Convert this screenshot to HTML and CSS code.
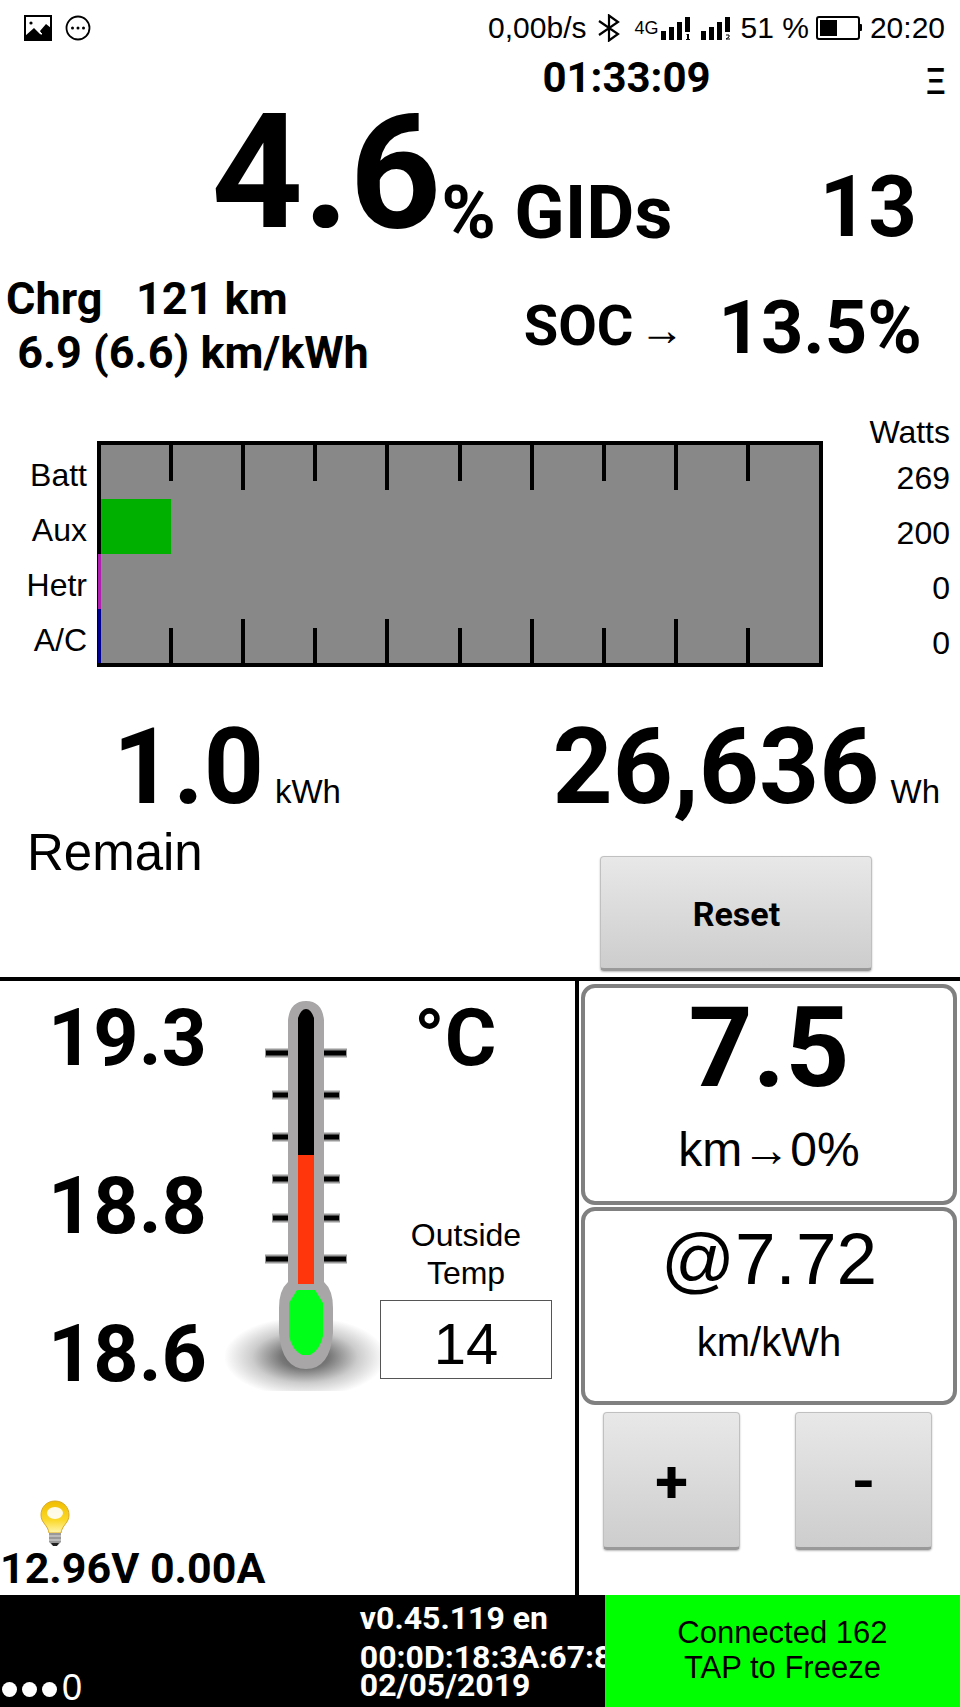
FILE: index.html
```html
<!DOCTYPE html>
<html lang="en">
  <head>
    <meta charset="UTF-8" />
    <meta name="viewport" content="width=device-width, initial-scale=1.0" />
    <title>EV Battery Monitor</title>
    <link rel="stylesheet" href="styles.css">
  </head>
  <body>
    <!-- phone status bar -->
    <div class="status">
      <svg class="icon" width="28" height="26" viewBox="0 0 28 26">
        <rect x="1" y="1" width="26" height="24" fill="none" stroke="#000" stroke-width="2" />
        <circle cx="7" cy="8" r="1.6" />
        <path d="M1 21L10 13L16 19L18 20L16 16L22 9L27 13V25H1Z" />
        <path d="M14 15L18 19" stroke="#fff" stroke-width="1" />
      </svg>
      <svg class="icon" width="26" height="26" viewBox="0 0 26 26">
        <circle cx="13" cy="13" r="11.5" fill="none" stroke="#000" stroke-width="1.8" />
        <circle cx="7.5" cy="13" r="1.5" />
        <circle cx="13" cy="13" r="1.5" />
        <circle cx="18.5" cy="13" r="1.5" />
      </svg>
      <span class="speed">0,00b/s</span>
      <svg class="bluetooth" width="22" height="28" viewBox="0 0 22 28">
        <path d="M1 7L20 20L11 26.500V1.500L20 8L1 21" fill="none" stroke="#000" stroke-width="2.2" />
      </svg>
      <span class="network">4G</span>
      <svg class="signal" width="30" height="26" viewBox="0 0 30 26">
        <path d="M0 16h5v9h-5zM8 12h5v13h-5zM16 7h5v18h-5zM24 2h5v15h-5zM26 19h2v5h1v1h-4v-1h1v-4h-1z" />
      </svg>
      <svg class="signal" width="30" height="26" viewBox="0 0 30 26">
        <path d="M0 16h5v9h-5zM8 12h5v13h-5zM16 7h5v18h-5zM24 2h5v15h-5z" />
        <path d="M25 20h3v2l-3 2h4" fill="none" stroke="#000" />
      </svg>
      <span class="percent">51 %</span>
      <svg class="battery" width="46" height="24" viewBox="0 0 46 24">
        <rect x="1" y="1" width="42" height="22" rx="2" fill="none" stroke="#000" stroke-width="2" />
        <rect x="4" y="4" width="17" height="16" />
        <rect x="43" y="8" width="3" height="7" rx="1" />
      </svg>
      <span class="clock">20:20</span>
    </div>

    <div class="topline">
      <div class="timer">01:33:09</div>
      <button class="menu" aria-label="Menu">Ξ</button>
    </div>

    <div class="gids">
      <div class="gids-percent">4.6</div>
      <div class="gids-label">% GIDs</div>
      <div class="gids-count">13</div>
    </div>

    <div class="summary">
      <div class="economy">
        <div>Chrg &nbsp; 121 km</div>
        <div>&nbsp;6.9 (6.6) km/kWh</div>
      </div>
      <div class="soc">
        <div class="soc-label">SOC<span class="arrow">→</span></div>
        <div class="soc-value">13.5%</div>
      </div>
    </div>

    <!-- power usage bars -->
    <div class="power">
      <div class="power-labels">
        <div>Batt</div>
        <div>Aux</div>
        <div>Hetr</div>
        <div>A/C</div>
      </div>
      <svg class="chart" viewBox="0 0 726 226">
        <rect x="2" y="2" width="722" height="222" fill="#888" stroke="#000" stroke-width="4" />
        <rect x="4" y="58" width="70" height="55" fill="#00b000" />
        <rect x="1" y="113" width="3" height="55" fill="#b020b0" />
        <rect x="1" y="168" width="3" height="54" fill="#000090" />
        <path d="M74 4v36M146 4v45M218 4v36M290 4v45M363 4v36M435 4v45M507 4v36M579 4v45M651 4v36" stroke="#000" stroke-width="4" />
        <path d="M74 222v-35M146 222v-44M218 222v-35M290 222v-44M363 222v-35M435 222v-44M507 222v-35M579 222v-44M651 222v-35" stroke="#000" stroke-width="4" />
      </svg>
      <div class="power-values">
        <div class="power-head">Watts</div>
        <div>269</div>
        <div>200</div>
        <div>0</div>
        <div>0</div>
      </div>
    </div>

    <div class="energy">
      <div class="remain">
        <div class="amount"><b>1.0</b><span>kWh</span></div>
        <div class="remain-label">Remain</div>
      </div>
      <div class="used">
        <div class="amount"><b>26,636</b><span>Wh</span></div>
        <button class="btn reset">Reset</button>
      </div>
    </div>

    <div class="panels">
      <div class="left">
        <div class="temps">
          <div class="readings">
            <div>19.3</div>
            <div>18.8</div>
            <div>18.6</div>
          </div>
          <svg class="thermo" width="155" height="393" viewBox="0 0 155 393">
            <defs>
              <radialGradient id="shadow">
                <stop offset="0" stop-color="#555" />
                <stop offset="0.3" stop-color="#777" />
                <stop offset="0.65" stop-color="#ccc" />
                <stop offset="1" stop-color="#fff" />
              </radialGradient>
            </defs>
            <ellipse cx="80" cy="359" rx="81" ry="40" fill="url(#shadow)" />
            <g stroke="#999" stroke-width="9">
              <path d="M40 55H122M47 97H115M47 139H115M47 181H115M47 220H115M40 261H122" />
            </g>
            <g stroke="#000" stroke-width="5">
              <path d="M41 55H121M48 97H114M48 139H114M48 181H114M48 220H114M41 261H121" />
            </g>
            <path d="M63 22Q65 3 81 3Q97 3 99 22V284Q108 292 108 310V335Q105 371 81 371Q57 371 54 335V310Q54 292 63 284Z" fill="#a8a6a6" />
            <path d="M73 157V20Q76 11 81 11Q86 11 89 20V157Z" />
            <rect x="73" y="157" width="16" height="129" fill="#ff350b" />
            <path d="M72 292H90L98 305V338Q95 352 85 357H77Q67 352 64 338V305Z" fill="#00ff19" />
          </svg>
          <div class="outside">
            <div class="unit">°C</div>
            <label for="outside">Outside<br />Temp</label>
            <input type="text" id="outside" value="14" />
          </div>
        </div>
        <div class="aux">
          <svg class="bulb" width="30" height="46" viewBox="0 0 30 46">
            <defs>
              <linearGradient id="glow" x1="0" y1="0" x2="0" y2="1">
                <stop offset="0" stop-color="#f0bd00" />
                <stop offset="0.6" stop-color="#fbd92a" />
                <stop offset="1" stop-color="#fff6b0" />
              </linearGradient>
            </defs>
            <path d="M15 1C6 1 1 8 1 15C1 23 8 25 9 33H21C22 25 29 23 29 15C29 8 24 1 15 1Z" fill="url(#glow)" stroke="#d9a928" />
            <ellipse cx="15" cy="13" rx="8" ry="6" fill="#fff" opacity="0.9" />
            <path d="M9 33H21V42L18 45H12L9 42Z" fill="#999" />
            <path d="M9 36H21M9 40H21" stroke="#ddd" />
            <path d="M11 43H19L17 46H13Z" fill="#222" />
          </svg>
          <div>12.96V 0.00A</div>
        </div>
      </div>

      <div class="right">
        <div class="card range">
          <div class="range-value">7.5</div>
          <div class="range-unit">km→0%</div>
        </div>
        <div class="card rate">
          <div class="rate-value">@7.72</div>
          <div class="rate-unit">km/kWh</div>
        </div>
        <div class="steps">
          <button class="btn step">+</button>
          <button class="btn step">-</button>
        </div>
      </div>
    </div>

    <div class="footer">
      <div class="dots"><i></i><i></i><i></i><span>0</span></div>
      <div class="info">
        <div class="version">v0.45.119 en</div>
        <div>00:0D:18:3A:67:8</div>
        <div>02/05/2019</div>
      </div>
      <button class="connection">Connected 162<br />TAP to Freeze</button>
    </div>
  </body>
</html>
```
FILE: styles.css
```css
* {
  box-sizing: border-box;
}

body {
  margin: 0;
  min-height: 100vh;
  display: flex;
  flex-direction: column;
  background: #fff;
  color: #000;
  font-family: "Liberation Sans", Arial, sans-serif;
  font-size: 32px;
}

button {
  font-family: inherit;
  color: #000;
  border: none;
  padding: 0;
  cursor: pointer;
}

/* status bar */
.status {
  display: flex;
  align-items: center;
  height: 54px;
  padding: 2px 15px 0 24px;
  font-size: 30px;
  white-space: nowrap;
}

.icon {
  margin-right: 13px;
}

.speed {
  margin-left: auto;
}

.bluetooth {
  margin: 0 15px 0 11px;
}

.network {
  font-size: 18px;
}

.signal {
  margin-left: 2px;
}

.signal + .signal {
  margin: 0 10px 0 10px;
}

.battery {
  margin: 0 8px 0 7px;
}

/* timer and menu */
.topline {
  display: flex;
  align-items: flex-end;
  justify-content: space-between;
  height: 42px;
  padding: 0 14px 0 56.5%;
  font-family: Roboto, sans-serif;
  font-weight: bold;
}

.timer {
  font-size: 42px;
  line-height: 36px;
}

.menu {
  background: none;
  font-family: Roboto, sans-serif;
  font-weight: 500;
  font-size: 36px;
  line-height: 28px;
}

.gids {
  display: flex;
  align-items: flex-end;
  padding: 0 43px 0 22%;
  font-family: Roboto, sans-serif;
  font-weight: bold;
}

.gids-percent {
  font-size: 160px;
  line-height: 154px;
}

.gids-label {
  font-size: 74px;
  line-height: 74px;
}

.gids-count {
  margin-left: auto;
  font-size: 85px;
  line-height: 86px;
}

.summary {
  display: flex;
  justify-content: space-between;
  padding: 22px 38px 0 6px;
  font-family: Roboto, sans-serif;
  font-weight: bold;
}

.economy {
  font-size: 45px;
  line-height: 54px;
}

.soc {
  display: flex;
  align-items: flex-end;
  gap: 34px;
  padding-bottom: 18px;
}

.soc-label {
  font-size: 56px;
  line-height: 64px;
}

.arrow {
  margin-left: 6px;
  font-family: "Liberation Sans", Arial, sans-serif;
  font-size: 45px;
}

.soc-value {
  font-size: 74px;
  line-height: 68px;
}

/* power bars */
.power {
  display: flex;
  align-items: flex-end;
  margin-top: 34px;
  padding-right: 10px;
  line-height: 55px;
  text-align: right;
}

.power-labels {
  width: 87px;
  margin: 0 10px 3px 0;
}

.chart {
  flex: 1;
  margin-bottom: 4px;
}

.power-values {
  width: 127px;
}

.power-head {
  line-height: 37px;
}

/* energy */
.energy {
  display: flex;
  justify-content: space-between;
  padding: 44px 20px 6px 27px;
}

.amount {
  display: flex;
  align-items: baseline;
  gap: 11px;
}

.amount span {
  font-size: 33px;
}

.amount b {
  font-family: Roboto, sans-serif;
  font-size: 105px;
  line-height: 105px;
}

.remain .amount {
  padding-left: 86px;
}

.remain-label {
  font-size: 51px;
  line-height: 60px;
  margin-top: 3px;
}

.btn {
  padding-top: 3px;
  font-family: Roboto, sans-serif;
  font-weight: bold;
  background: linear-gradient(#e8e8e8, #cdcdcd);
  border: 1px solid #c0c0c0;
  border-bottom: 3px solid #999;
  border-radius: 4px;
  box-shadow: 0 1px 2px #bbb;
}

.reset {
  display: block;
  width: 272px;
  height: 115px;
  margin: 36px 0 0 48px;
  font-size: 34px;
}

/* lower panels */
.panels {
  flex: 1;
  display: grid;
  grid-template-columns: 579fr 381fr;
  border-top: 4px solid #000;
}

.left {
  display: flex;
  flex-direction: column;
  justify-content: space-between;
  border-right: 4px solid #000;
  padding: 17px 23px 5px 0;
}

.temps {
  display: flex;
  font-family: Roboto, sans-serif;
}

.readings {
  flex: 1;
  padding-left: 48px;
  font-size: 79px;
  font-weight: bold;
  line-height: 80px;
}

.readings div + div {
  margin-top: 88px;
}

.readings div:last-child {
  margin-top: 68px;
}

.outside {
  display: flex;
  flex-direction: column;
  width: 172px;
  padding-bottom: 15px;
  font-family: "Liberation Sans", Arial, sans-serif;
}

.unit {
  padding-left: 34px;
  font-family: Roboto, sans-serif;
  font-size: 79px;
  font-weight: bold;
  line-height: 80px;
}

.outside label {
  margin: auto 0 8px;
  line-height: 38px;
  text-align: center;
}

.outside input {
  width: 100%;
  height: 79px;
  padding: 8px 0 0;
  border: 1px solid #555;
  background: #fff;
  font-family: inherit;
  font-size: 58px;
  text-align: center;
}

.aux {
  font-family: Roboto, sans-serif;
  font-size: 43px;
  font-weight: bold;
  line-height: 44px;
}

.bulb {
  display: block;
  margin-left: 40px;
}

.right {
  padding: 3px 3px 0 2px;
}

.card {
  border: 4px solid #808080;
  border-radius: 14px;
  text-align: center;
}

.range {
  height: 221px;
  padding-top: 4px;
}

.range-value {
  font-family: Roboto, sans-serif;
  font-size: 112px;
  font-weight: bold;
  line-height: 112px;
}

.range-unit {
  margin-top: 18px;
  font-size: 48px;
  line-height: 56px;
}

.rate {
  height: 198px;
  margin-top: 2px;
  padding-top: 8px;
}

.rate-value {
  font-size: 73px;
  line-height: 80px;
}

.rate-unit {
  margin-top: 19px;
  font-size: 40px;
  line-height: 48px;
}

.steps {
  display: flex;
  justify-content: space-between;
  padding: 7px 25px 0 22px;
}

.step {
  width: 137px;
  height: 138px;
  font-size: 60px;
}

/* footer */
.footer {
  display: flex;
  height: 112px;
  background: #000;
  color: #fff;
}

.dots {
  display: flex;
  align-items: flex-end;
  gap: 5px;
  flex: 1;
  padding: 0 0 10px 2px;
}

.dots i {
  width: 15px;
  height: 15px;
  border-radius: 50%;
  background: #fff;
}

.dots span {
  font-size: 36px;
  line-height: 18px;
}

.info {
  width: 247px;
  padding: 9px 0 0 2px;
  overflow: hidden;
  white-space: nowrap;
  font-family: Roboto, sans-serif;
  font-weight: bold;
  line-height: 28px;
}

.version {
  margin-bottom: 11px;
}

.connection {
  width: 37%;
  padding-bottom: 3px;
  background: #00ff00;
  font-size: 31px;
  line-height: 35px;
}
```
